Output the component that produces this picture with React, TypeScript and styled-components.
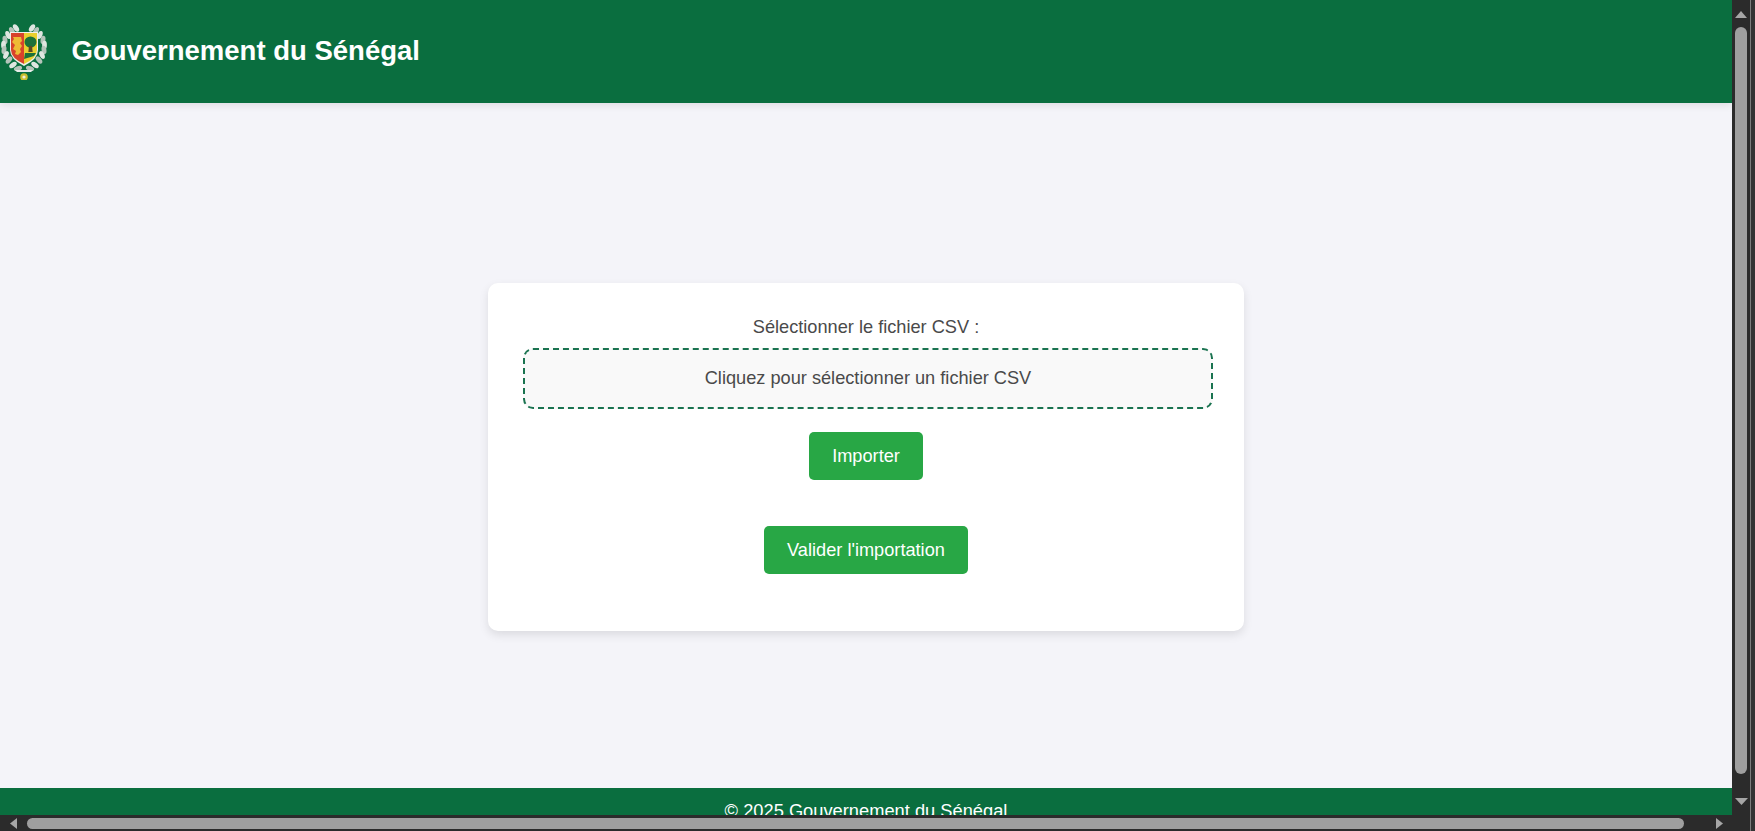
import React from "react";
import styled, { createGlobalStyle } from "styled-components";

const Global = createGlobalStyle`
  html, body { margin: 0; padding: 0; height: 100%; overflow: hidden; background: #f4f4f9; }
  * { box-sizing: border-box; }
`;

const Frame = styled.div`
  width: 1755px;
  height: 831px;
  display: grid;
  grid-template-columns: 1732px 18px 1px 4px;
  grid-template-rows: 815px 16px;
  overflow: hidden;
  background: #2b2b2b;
  font-family: "Liberation Sans", Arial, sans-serif;
`;

const Viewport = styled.div`
  display: flex;
  flex-direction: column;
  overflow: hidden;
  background: #f4f4f9;
`;

const Header = styled.header`
  flex: 0 0 103px;
  display: flex;
  align-items: center;
  gap: 23.500px;
  background: #0a6e3f;
  box-shadow: 0 2px 8px rgba(0, 0, 0, 0.1);
  position: relative;
`;

const Crest = styled.svg`
  width: 48px;
  height: 56px;
  margin-top: 1px;
  flex: none;
`;

const Title = styled.h1`
  margin: 0 0 1px;
  font-size: 27.500px;
  font-weight: 700;
  color: #fff;
`;

const Main = styled.main`
  flex: 0 0 685px;
  display: flex;
  align-items: center;
  justify-content: center;
  padding-top: 23px;
`;

const Card = styled.section`
  width: 756px;
  height: 348px;
  padding: 34px 33px 0;
  background: #fff;
  border-radius: 10px;
  box-shadow: 0 4px 10px rgba(0, 0, 0, 0.1);
  display: flex;
  flex-direction: column;
  align-items: center;
`;

const Label = styled.label`
  font-size: 18.200px;
  line-height: 21px;
  color: #4a4a4a;
  margin-bottom: 10px;
`;

const Drop = styled.div`
  width: 690px;
  height: 61px;
  margin-left: 4px;
  flex: none;
  display: flex;
  align-items: center;
  justify-content: center;
  background: #f9f9f9;
  border: 2px dashed #1a7350;
  border-radius: 10px;
  color: #4a4a4a;
  font-size: 18.200px;
`;

const Action = styled.button<{ $top: number; $width: number }>`
  width: ${(p) => p.$width}px;
  height: 48px;
  margin-top: ${(p) => p.$top}px;
  flex: none;
  border: 0;
  padding: 0;
  border-radius: 5px;
  background: #28a745;
  color: #fff;
  font: 18.200px "Liberation Sans", Arial, sans-serif;
`;

const Footer = styled.footer`
  flex: 0 0 60px;
  padding-top: 12px;
  background: #0a6e3f;
  color: #fff;
  font-size: 18.300px;
  line-height: 21px;
  text-align: center;
`;

const VTrack = styled.div`
  grid-row: 1 / 3;
  grid-column: 2;
  display: flex;
  flex-direction: column;
  align-items: center;
  padding-top: 11px;
  background: #2b2b2b;
`;

const Edge = styled.div`
  grid-row: 1 / 3;
  grid-column: 3;
  background: #7c7c7c;
`;

const Rim = styled.div`
  grid-row: 1 / 3;
  grid-column: 4;
  background: #333;
`;

const VThumb = styled.div`
  width: 12px;
  height: 747px;
  margin-top: 9px;
  border-radius: 6px;
  background: #9f9f9f;
`;

const HTrack = styled.div`
  display: flex;
  align-items: flex-start;
  padding: 3px 0 0 10px;
  background: #2b2b2b;
`;

const HThumb = styled.div`
  width: 1657px;
  height: 11px;
  margin: 0 32px 0 10px;
  border-radius: 6px;
  background: #9f9f9f;
`;

const Arrow = styled.svg`
  flex: none;
  display: block;
  fill: #a6a6a6;
`;

const DownArrow = styled(Arrow)`
  margin-top: 24px;
`;

const leaves = (side: 1 | -1) => {
  const pts = [
    [16, 28, -35], [12, 31, -30], [8, 35, -20], [5, 40, -10], [3.500, 45, 0], [4, 50, 10],
    [6, 55, 25], [9, 60, 40], [13, 65, 55], [18, 68.500, 72],
  ];
  return pts.map(([x, y, r], i) => {
    const cx = side === 1 ? x : 48 - x;
    return (
      <ellipse
        key={i}
        cx={cx}
        cy={y}
        rx={2.400}
        ry={4.200}
        fill={i % 2 ? "#b4c4ba" : "#dfe6e1"}
        transform={`rotate(${side * r} ${cx} ${y})`}
      />
    );
  });
};

export default function App() {
  return (
    <Frame>
      <Global />
      <Viewport>
        <Header>
          <Crest viewBox="0 24 48 56" aria-label="Armoiries du Sénégal">
            {leaves(1)}
            {leaves(-1)}
            <path d="M15 70h18l-2 2H17z" fill="#e8ece9" />
            <path d="M10 32h28v18q0 9-14 16q-14-7-14-16z" fill="#eef0ea" />
            <path d="M11 33h13v31q-13-6-13-14z" fill="#d8432b" />
            <path d="M24 33h13v17q0 8-13 14z" fill="#e9d02f" />
            <path d="M13 37h8l1 4-2 2 2 3-2 3 1 3-3 3-3-1 1-3-3-2 2-4-3-3 2-3z" fill="#eebb35" />
            <ellipse cx="30.500" cy="42" rx="6" ry="5.500" fill="#1c7139" />
            <path d="M29 46h3l.7 6h-4.400z" fill="#5b4a22" />
            <path d="M25 53h11l-2 3-10 3z" fill="#1c7139" />
            <circle cx="24" cy="77" r="3.800" fill="#c9bf2f" />
            <circle cx="24" cy="77" r="1.600" fill="#f1efd6" />
          </Crest>
          <Title>Gouvernement du Sénégal</Title>
        </Header>
        <Main>
          <Card>
            <Label>Sélectionner le fichier CSV :</Label>
            <Drop>Cliquez pour sélectionner un fichier CSV</Drop>
            <Action $top={23} $width={114}>Importer</Action>
            <Action $top={46} $width={204}>Valider l'importation</Action>
          </Card>
        </Main>
        <Footer>© 2025 Gouvernement du Sénégal</Footer>
      </Viewport>
      <VTrack>
        <Arrow width="12" height="7" viewBox="0 0 12 7"><path d="M6 0l6 7H0z" /></Arrow>
        <VThumb />
        <DownArrow width="13" height="7" viewBox="0 0 13 7"><path d="M0 0h13L6.500 7z" /></DownArrow>
      </VTrack>
      <Edge />
      <Rim />
      <HTrack>
        <Arrow width="7" height="11" viewBox="0 0 7 11"><path d="M7 0v11L0 5.500z" /></Arrow>
        <HThumb />
        <Arrow width="7" height="11" viewBox="0 0 7 11"><path d="M0 0l7 5.500L0 11z" /></Arrow>
      </HTrack>
    </Frame>
  );
}
